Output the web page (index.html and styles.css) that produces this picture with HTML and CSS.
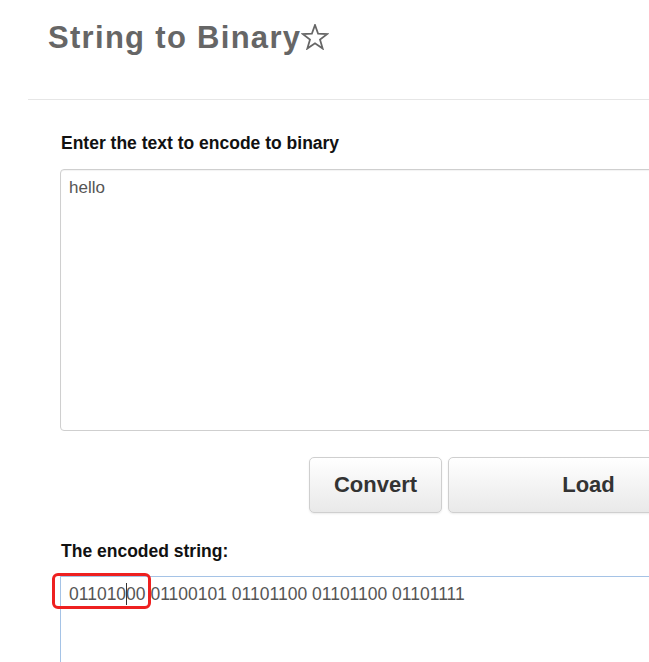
FILE: index.html
```html
<!DOCTYPE html>
<html lang="en">
<head>
<meta charset="utf-8">
<title>String to Binary</title>
<link rel="stylesheet" href="styles.css">
</head>
<body>
<header class="head">
  <h1 class="title">String to Binary<svg class="star" viewBox="0 0 28 26" width="28" height="26" aria-hidden="true"><polygon points="14,1 17.12,9.71 26.36,9.98 19.04,15.64 21.64,24.52 14,19.3 6.36,24.52 8.96,15.64 1.64,9.98 10.88,9.71" fill="none" stroke="#666" stroke-width="1.8" stroke-linejoin="miter"/></svg></h1>
</header>
<div class="rule"></div>
<main class="main">
  <label class="label" for="src">Enter the text to encode to binary</label>
  <textarea class="input" id="src">hello</textarea>
  <div class="actions">
    <button class="btn btn-convert">Convert</button>
    <button class="btn btn-load">Load</button>
  </div>
  <label class="label label-out">The encoded string:</label>
  <div class="output-wrap">
    <div class="output">011010<span class="caret"></span>00 01100101 01101100 01101100 01101111</div>
    <span class="highlight"></span>
  </div>
</main>
</body>
</html>
```
FILE: styles.css
```css
html, body {
  margin: 0;
  padding: 0;
  background: #fff;
}
body {
  font-family: "Liberation Sans", Arial, sans-serif;
  overflow: hidden;
  width: 649px;
  height: 662px;
}
.head {
  padding: 20px 0 43px 48px;
}
.title {
  margin: 0;
  font-size: 31px;
  line-height: 36px;
  font-weight: bold;
  color: #666;
  letter-spacing: 1.3px;
  white-space: nowrap;
}
.star {
  vertical-align: -2px;
  margin-left: 0;
}
.rule {
  margin-left: 28px;
  border-top: 1px solid #e6e6e6;
}
.main {
  padding: 33px 0 0 60px;
  width: 669px;
  display: flex;
  flex-direction: column;
}
.label {
  display: block;
  font-size: 17.5px;
  line-height: 20px;
  font-weight: bold;
  color: #111;
  padding-left: 1px;
}
.input {
  margin-top: 16px;
  box-sizing: border-box;
  width: 669px;
  height: 262px;
  border: 1px solid #cfcfcf;
  border-radius: 4px;
  padding: 8px;
  font-family: "Liberation Sans", Arial, sans-serif;
  font-size: 17px;
  line-height: 20px;
  color: #555;
  resize: none;
  outline: none;
  box-shadow: inset 0 1px 1px rgba(0,0,0,0.05);
}
.actions {
  margin-top: 26px;
  display: flex;
  justify-content: flex-end;
  gap: 6px;
}
.btn {
  box-sizing: border-box;
  height: 56px;
  border: 1px solid #cfcfcf;
  border-radius: 5px;
  background: linear-gradient(#ffffff, #e9e9e9);
  box-shadow: 0 1px 2px rgba(0,0,0,0.08);
  font-family: "Liberation Sans", Arial, sans-serif;
  font-size: 22px;
  font-weight: bold;
  color: #333;
  padding: 0;
}
.btn-convert {
  width: 133px;
}
.btn-load {
  width: 281px;
}
.label-out {
  margin-top: 28px;
}
.output-wrap {
  position: relative;
  margin-top: 15px;
}
.output {
  box-sizing: border-box;
  width: 669px;
  height: 140px;
  border: 1px solid #a5c3e6;
  padding: 6px 8px;
  font-size: 17.5px;
  line-height: 20px;
  color: #555;
  white-space: nowrap;
}
.caret {
  display: inline-block;
  width: 0;
  height: 22px;
  border-left: 1px solid #333;
  margin-right: -1px;
  vertical-align: -5px;
}
.highlight {
  position: absolute;
  left: -8px;
  top: -3px;
  width: 99px;
  height: 36px;
  box-sizing: border-box;
  border: 3px solid #ee2020;
  border-radius: 6px;
}
```
